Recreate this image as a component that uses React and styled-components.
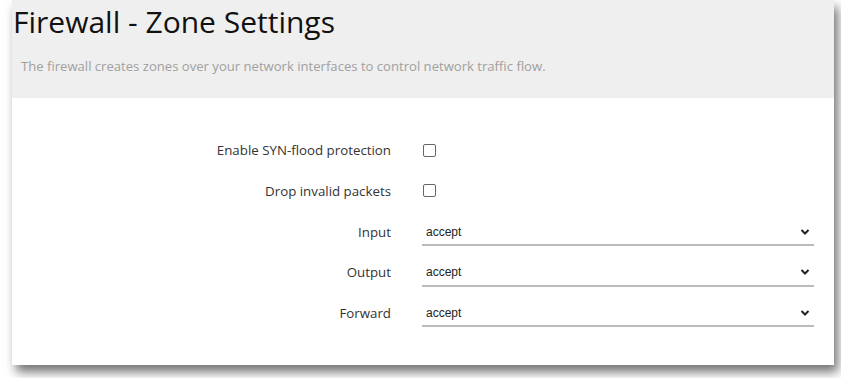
import React from 'react';
import styled, { createGlobalStyle } from 'styled-components';

const GlobalStyle = createGlobalStyle`
  body {
    margin: 0;
    background: #fff;
    font-family: "Open Sans", "Noto Sans", sans-serif;
  }
`;

const Page = styled.div`
  width: 841px;
  height: 378px;
  overflow: hidden;
`;

const Card = styled.div`
  margin-left: 12px;
  width: 822px;
  box-shadow: 4px 7px 10px rgba(0, 0, 0, 0.55);
`;

const Header = styled.div`
  height: 98px;
  box-sizing: border-box;
  background: #efefef;
  padding: 1px 0 0 1px;
`;

const Title = styled.h1`
  margin: 0;
  font-size: 30px;
  font-weight: 400;
  line-height: 42px;
  color: #111;
`;

const Description = styled.p`
  margin: 14px 0 0 8px;
  font-size: 13.1px;
  line-height: 18px;
  color: #a0a0a0;
`;

const Body = styled.div`
  background: #fff;
  padding: 32px 0 32px;
  height: 267px;
  box-sizing: border-box;
`;

const Row = styled.div`
  display: grid;
  grid-template-columns: 379px 392px;
  column-gap: 31px;
  align-items: center;
  height: ${p => p.h || 40}px;
`;

const Label = styled.label`
  text-align: right;
  font-size: 13.3px;
  color: #333;
`;

const Check = styled.span`
  width: 11px;
  height: 11px;
  border: 1px solid #666;
  border-radius: 2px;
  margin-left: 1px;
`;

const Select = styled.div`
  display: flex;
  align-items: center;
  justify-content: space-between;
  height: 26px;
  margin-top: 3px;
  box-sizing: border-box;
  border-bottom: 2px solid #bbb;
  padding: 0 4px 1px 4px;
  font-family: "Liberation Sans", Arial, sans-serif;
  font-size: 12px;
  color: #222;
`;

const Chevron = () => (
  <svg width="10" height="8" viewBox="0 0 10 8">
    <polyline points="1.5,2 5,5.5 8.5,2" fill="none" stroke="#222" strokeWidth="2" />
  </svg>
);

const fields = [
  { label: 'Input', h: 41 },
  { label: 'Output', h: 40 },
  { label: 'Forward', h: 41 },
];

export default function App() {
  return (
    <Page>
      <GlobalStyle />
      <Card>
        <Header>
          <Title>Firewall - Zone Settings</Title>
          <Description>
            The firewall creates zones over your network interfaces to control network traffic flow.
          </Description>
        </Header>
        <Body>
          <Row h={40}>
            <Label>Enable SYN-flood protection</Label>
            <Check />
          </Row>
          <Row h={41}>
            <Label>Drop invalid packets</Label>
            <Check />
          </Row>
          {fields.map(f => (
            <Row key={f.label} h={f.h}>
              <Label>{f.label}</Label>
              <Select>
                <span>accept</span>
                <Chevron />
              </Select>
            </Row>
          ))}
        </Body>
      </Card>
    </Page>
  );
}
